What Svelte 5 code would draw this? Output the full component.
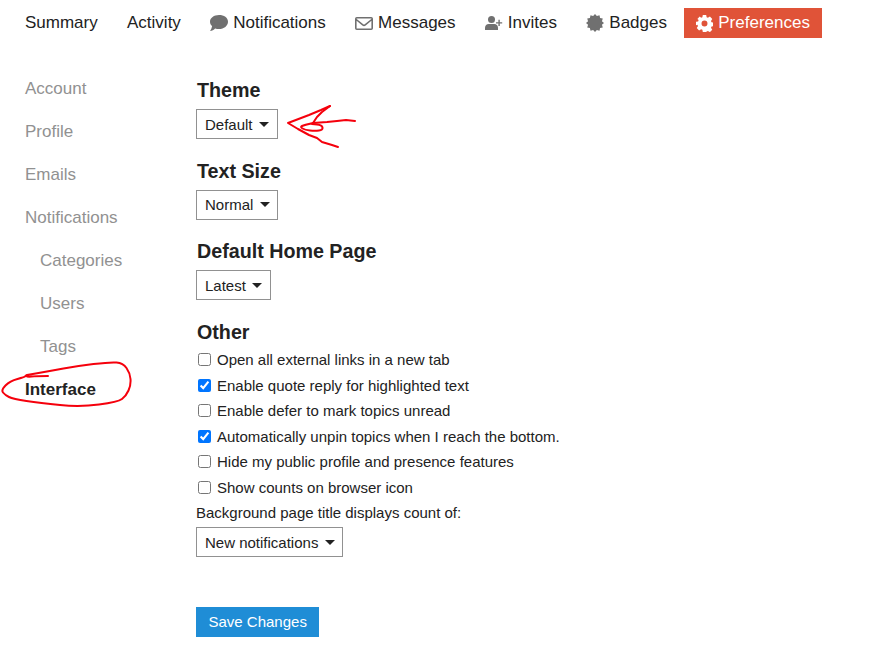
<script>
  const tabs = [
    { label: "Summary" },
    { label: "Activity" },
    { label: "Notifications", icon: "comment" },
    { label: "Messages", icon: "envelope" },
    { label: "Invites", icon: "invite" },
    { label: "Badges", icon: "badge" },
    { label: "Preferences", icon: "cog", active: true }
  ];
  const sideLinks = [
    { label: "Account" },
    { label: "Profile" },
    { label: "Emails" },
    { label: "Notifications" },
    { label: "Categories", sub: true },
    { label: "Users", sub: true },
    { label: "Tags", sub: true },
    { label: "Interface", active: true }
  ];
  const sections = [
    { title: "Theme", value: "Default" },
    { title: "Text Size", value: "Normal" },
    { title: "Default Home Page", value: "Latest" }
  ];
  const options = [
    { label: "Open all external links in a new tab", checked: false },
    { label: "Enable quote reply for highlighted text", checked: true },
    { label: "Enable defer to mark topics unread", checked: false },
    { label: "Automatically unpin topics when I reach the bottom.", checked: true },
    { label: "Hide my public profile and presence features", checked: false },
    { label: "Show counts on browser icon", checked: false }
  ];

  // spiky circle for the badge icon
  let badgePoints = [];
  for (let i = 0; i < 24; i++) {
    const r = i % 2 ? 7.2 : 9;
    const a = (i * Math.PI) / 12;
    badgePoints.push((9 + r * Math.cos(a)).toFixed(2) + "," + (9 + r * Math.sin(a)).toFixed(2));
  }
  const badge = badgePoints.join(" ");

  // freehand strokes: quadratic curves through the midpoints
  function smooth(pts) {
    let d = `M${pts[0][0]} ${pts[0][1]}`;
    for (let i = 1; i < pts.length - 1; i++) {
      const mx = (pts[i][0] + pts[i + 1][0]) / 2;
      const my = (pts[i][1] + pts[i + 1][1]) / 2;
      d += `Q${pts[i][0]} ${pts[i][1]} ${mx} ${my}`;
    }
    const last = pts[pts.length - 1];
    return d + `L${last[0]} ${last[1]}`;
  }

  const arrowHead = "M330 106L321 110L309 115L288 123L298 129L309 135L317 138L322 142L332 145L338 147";
  const arrowShaft = "M330 106L322 112L317 117L313 123L327 122L337 121L346 120L355 121";
  const arrowLoop = smooth([[313, 123], [304, 125], [300, 127], [305, 130], [315, 131], [323, 130], [322, 125], [312, 124]]);
  const ring = smooth([
    [48, 376], [36, 376], [27, 377], [26, 375], [25, 377], [10, 381], [1, 390], [5, 395], [13, 399], [40, 403],
    [80, 407], [118, 402], [126, 396], [131, 385], [130, 373], [123, 363], [110, 362], [77, 366], [50, 371], [27, 375]
  ]);
</script>

<div class="page">
  <nav class="tabs">
    {#each tabs as tab}
      <a class="tab" class:active={tab.active} href="#top">
        {#if tab.icon === "comment"}
          <svg width="18" height="17" viewBox="0 0 18 17"><path fill="#707070" d="M9 0C4 0 0 2.900 0 6.700c0 1.700.8 3.200 2.100 4.400-.3 1.900-1.100 3.500-2 5 1.900-.3 3.800-1.300 5-2.700 1.200.4 2.500.6 3.900.6 5 0 9-3.200 9-7.300S14 0 9 0z"/></svg>
        {:else if tab.icon === "envelope"}
          <svg width="18" height="13" viewBox="0 0 18 13"><path fill="none" stroke="#707070" stroke-width="1.600" d="M1.800.8h14.400c.6 0 1 .4 1 1v9.400c0 .6-.4 1-1 1H1.800c-.6 0-1-.4-1-1V1.800c0-.6.400-1 1-1zM1.200 2.500l6.600 5.400c.7.600 1.700.6 2.400 0l6.600-5.400"/></svg>
        {:else if tab.icon === "invite"}
          <svg width="18" height="14" viewBox="0 0 18 14"><circle cx="6.500" cy="3.500" r="3.500" fill="#707070"/><path fill="#707070" d="M0 14v-2.200C0 9.500 1.700 8 3.700 8h5.600c2 0 3.700 1.500 3.700 3.800V14z"/><path fill="#707070" d="M13.400 3.800h1.400v2.400h2.400v1.400h-2.400V10h-1.400V7.600H11V6.200h2.400z"/></svg>
        {:else if tab.icon === "badge"}
          <svg width="18" height="18" viewBox="0 0 18 18"><polygon fill="#707070" points={badge}/></svg>
        {:else if tab.icon === "cog"}
          <svg width="17" height="17" viewBox="0 0 16 16"><path fill="#fff" fill-rule="evenodd" d="M6.400 0h3.200l.4 2.100c.4.100.8.300 1.200.5l1.900-1.100 2.200 2.300-1.200 1.800c.2.400.4.800.5 1.200l2 .4v3.200l-2 .4c-.1.400-.3.800-.5 1.200l1.200 1.800-2.200 2.300-1.900-1.100c-.4.200-.8.400-1.200.5L9.600 16H6.400L6 13.900c-.4-.1-.8-.3-1.200-.5l-1.900 1.100-2.200-2.300 1.200-1.800c-.2-.4-.4-.8-.5-1.200L0 9.600V6.400l2-.4c.1-.4.300-.8.500-1.200L1.300 3.800l2.200-2.300 1.300 1.100c.4-.2.800-.4 1.200-.5zM8 5.200a2.800 2.800 0 1 0 0 5.600 2.800 2.800 0 0 0 0-5.600z"/></svg>
        {/if}
        {tab.label}
      </a>
    {/each}
  </nav>

  <div class="body">
    <aside class="side">
      {#each sideLinks as link}
        <a class="side-link" class:sub={link.sub} class:active={link.active} href="#top">{link.label}</a>
      {/each}
    </aside>

    <main class="form">
      {#each sections as section}
        <section class="block">
          <h3>{section.title}</h3>
          <button class="select">{section.value}<span class="caret"></span></button>
        </section>
      {/each}

      <section class="block other">
        <h3>Other</h3>
        {#each options as opt}
          <label class="check">
            <input type="checkbox" checked={opt.checked} />
            <span>{opt.label}</span>
          </label>
        {/each}
        <p class="count-label">Background page title displays count of:</p>
        <button class="select">New notifications<span class="caret"></span></button>
      </section>

      <button class="save">Save Changes</button>
    </main>
  </div>

  <!-- hand drawn annotations on top of the screenshot -->
  <svg class="marks" width="878" height="653" viewBox="0 0 878 653" fill="none" stroke="#f5000c" stroke-width="2" stroke-linecap="round" stroke-linejoin="round">
    <path d={arrowHead}/>
    <path d={arrowShaft}/>
    <path d={arrowLoop}/>
    <path d={ring}/>
  </svg>
</div>

<style>
  :global(body) {
    background: #fff;
    font-family: "Liberation Sans", Arial, sans-serif;
    color: #222;
  }
  .page {
    position: relative;
    width: 878px;
    height: 653px;
    overflow: hidden;
  }
  .tabs {
    display: flex;
    align-items: center;
    gap: 5.300px;
    padding: 8px 0 0 13px;
  }
  .tab {
    display: flex;
    align-items: center;
    gap: 5px;
    height: 30px;
    padding: 0 12px;
    font-size: 17px;
    color: #222;
    text-decoration: none;
  }
  .tab.active {
    background: #e05338;
    color: #fff;
    padding-right: 12.500px;
  }
  .body {
    display: flex;
    padding-top: 29px;
  }
  .side {
    display: flex;
    flex-direction: column;
    width: 196px;
    flex: none;
  }
  .side-link {
    height: 43px;
    line-height: 43px;
    padding-left: 25px;
    font-size: 17px;
    color: #919191;
    text-decoration: none;
  }
  .side-link.sub {
    padding-left: 40px;
  }
  .side-link.active {
    color: #222;
    font-weight: bold;
  }
  .form {
    flex: 1;
    padding-top: 10px;
  }
  .block {
    margin-bottom: 18.600px;
  }
  h3 {
    margin: 0 0 6px 1px;
    font-size: 19.700px;
    line-height: 26px;
    font-weight: bold;
    color: #222;
  }
  .other h3 {
    margin-bottom: 2px;
  }
  .select {
    display: inline-flex;
    align-items: center;
    height: 30px;
    padding: 0 7.500px 0 8px;
    background: #fff;
    border: 1px solid #919191;
    font: 15px "Liberation Sans", Arial, sans-serif;
    color: #222;
  }
  .caret {
    margin-left: 6.500px;
    border-left: 5px solid transparent;
    border-right: 5px solid transparent;
    border-top: 5px solid #222;
  }
  .check {
    display: flex;
    align-items: center;
    gap: 6px;
    height: 25.500px;
    font-size: 15px;
  }
  .check input {
    width: 13px;
    height: 13px;
    margin: 0 0 0 2px;
  }
  .count-label {
    margin: 0;
    height: 27.500px;
    line-height: 25px;
    font-size: 15px;
  }
  .save {
    display: block;
    margin-top: 49.500px;
    height: 30px;
    padding: 0 12.500px;
    background: #1f8dd6;
    border: none;
    color: #fff;
    font: 15px "Liberation Sans", Arial, sans-serif;
  }
  .marks {
    position: absolute;
    left: 0;
    top: 0;
    pointer-events: none;
  }
</style>
